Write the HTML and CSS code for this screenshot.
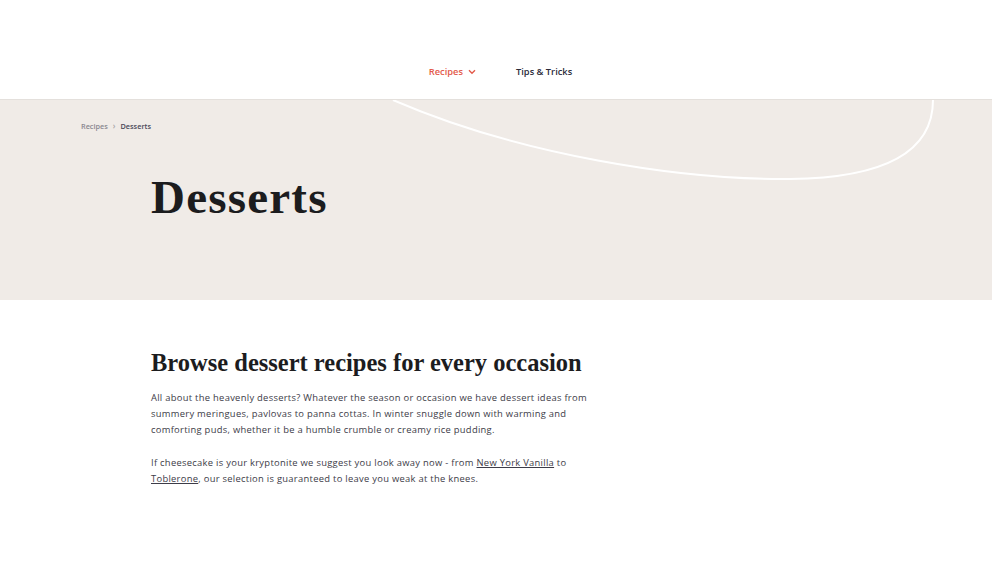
FILE: index.html
```html
<!DOCTYPE html>
<html lang="en">
<head>
<meta charset="utf-8">
<title>Desserts</title>
<link rel="stylesheet" href="styles.css">
</head>
<body>
<header class="site-header">
  <nav class="main-nav">
    <a class="nav-item nav-item--active" href="#">Recipes
      <svg class="chev" width="8" height="6" viewBox="0 0 8 6"><path d="M1 1.2 L4 4.2 L7 1.2" fill="none" stroke="currentColor" stroke-width="1.4"/></svg>
    </a>
    <a class="nav-item" href="#">Tips &amp; Tricks</a>
  </nav>
</header>
<section class="hero">
  <svg class="hero-curve" width="992" height="100" viewBox="0 0 992 100" preserveAspectRatio="none">
    <path d="M393 0 C 520 55, 680 80, 790 79 C 880 78, 933 55, 933 0" fill="none" stroke="#ffffff" stroke-width="2"/>
  </svg>
  <div class="breadcrumb">
    <a href="#" class="crumb">Recipes</a>
    <span class="crumb-sep">›</span>
    <span class="crumb crumb--current">Desserts</span>
  </div>
  <h1 class="hero-title">Desserts</h1>
</section>
<main class="content">
  <h2 class="content-title">Browse dessert recipes for every occasion</h2>
  <p class="content-text">All about the heavenly desserts? Whatever the season or occasion we have dessert ideas from summery meringues, pavlovas to panna cottas. In winter snuggle down with warming and comforting puds, whether it be a humble crumble or creamy rice pudding.</p>
  <p class="content-text">If cheesecake is your kryptonite we suggest you look away now - from <a href="#">New York Vanilla</a> to <a href="#">Toblerone</a>, our selection is guaranteed to leave you weak at the knees.</p>
</main>
</body>
</html>
```
FILE: styles.css
```css
* { box-sizing: border-box; }
html, body { margin: 0; padding: 0; background: #ffffff; }
body { font-family: "Open Sans", "Liberation Sans", sans-serif; color: #1e1e24; }

.site-header {
  height: 100px;
  border-bottom: 1px solid #e4e0dc;
  display: flex;
  align-items: flex-start;
  justify-content: center;
  padding-top: 65px;
  padding-left: 9px;
}
.main-nav { display: flex; gap: 40px; }
.nav-item {
  font-size: 9.3px;
  font-weight: 600;
  color: #2b2b3a;
  text-decoration: none;
  display: flex;
  align-items: center;
  gap: 5px;
}
.nav-item--active { color: #e35a4a; }
.chev { display: block; }

.hero {
  position: relative;
  height: 200px;
  background: #f0ebe7;
  padding: 20px 0 0 81px;
  overflow: hidden;
}
.hero-curve { position: absolute; left: 0; top: 0; }
.breadcrumb {
  position: relative;
  display: flex;
  align-items: center;
  gap: 5px;
  font-size: 7.3px;
  font-weight: 600;
}
.crumb { color: #8a8790; text-decoration: none; }
.crumb-sep { color: #a8a4a8; font-size: 8px; }
.crumb--current { color: #4a4858; }
.hero-title {
  position: relative;
  margin: 43px 0 0 70px;
  font-family: "Liberation Serif", serif;
  font-weight: 700;
  font-size: 47px;
  letter-spacing: 1.2px;
  line-height: 1;
  color: #1c1c1e;
}

.content { padding: 48px 0 0 151px; width: 600px; }
.content-title {
  margin: 0 0 13px;
  font-family: "Liberation Serif", serif;
  font-weight: 700;
  font-size: 24.5px;
  line-height: 1.2;
  color: #1c1c1e;
}
.content-text {
  margin: 0 0 17px;
  width: 445px;
  font-size: 9.4px;
  letter-spacing: 0.29px;
  line-height: 16px;
  color: #3d3c48;
}
.content-text a { color: #3d3c48; text-decoration: underline; }
```
